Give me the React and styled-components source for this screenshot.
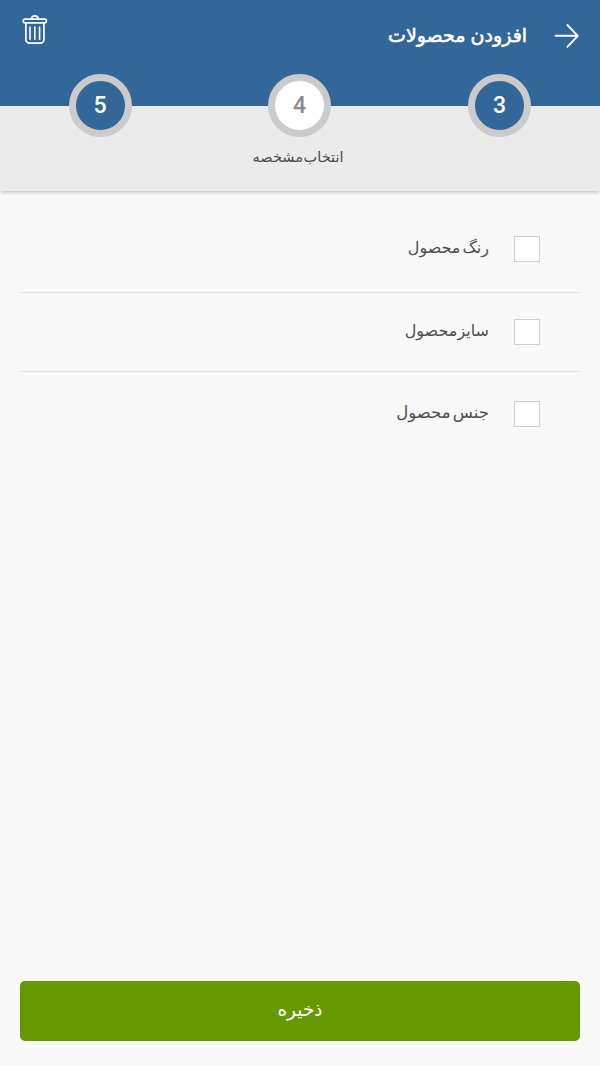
import React, { useState } from 'react';
import styled, { createGlobalStyle } from 'styled-components';


const GlobalStyle = createGlobalStyle`
    * {
        box-sizing: border-box;
    }
    body {
        margin: 0;
        background: #f9f9f9;
        font-family: "DejaVu Sans", "Noto Sans", sans-serif;
    }
`;

const Page = styled.div`
    display: flex;
    flex-direction: column;
    width: 600px;
    height: 1066px;
    background: #f9f9f9;
`;

const Header = styled.header`
    display: flex;
    height: 106px;
    padding: 13px 20px 0 21px;
    background: #336699;
    color: #fff;
`;

const IconButton = styled.button`
    display: flex;
    width: 28px;
    height: 34px;
    padding: 0;
    border: 0;
    background: none;
    color: inherit;
`;

const BackButton = styled(IconButton)`
    width: 26px;
    margin: 9px 0 0 0;
`;

const Title = styled.h1`
    margin: 6px 27px 0 0;
    font-size: 19px;
    font-weight: 400;
    line-height: 32px;
    word-spacing: -1px;
    white-space: nowrap;
    -webkit-text-stroke: 0.6px #fff;
    flex: 1;
`;

const Steps = styled.nav`
    display: grid;
    grid-template-columns: repeat(3, 200px);
    justify-items: center;
    height: 85px;
    background: #ebebeb;
    box-shadow: 0 3px 3px -1px rgba(0, 0, 0, 0.18);
`;

const Step = styled.div`
    display: flex;
    flex-direction: column;
    align-items: center;
    margin-top: -32.5px;
    margin-right: ${props => props.$shift || 0}px;
`;

const StepCircle = styled.div`
    display: flex;
    align-items: center;
    justify-content: center;
    width: 63px;
    height: 63px;
    border: 7px solid #cbcbcb;
    border-radius: 50%;
    background: ${props => props.$current ? '#fff' : '#336699'};
    color: ${props => props.$current ? '#8a8a8a' : '#fff'};
    font-family: Roboto, sans-serif;
    font-size: 23px;
    font-weight: 500;
`;

const StepLabel = styled.span`
    margin: 8px 3px 0 0;
    color: #4d4d4d;
    font-size: 14.5px;
    line-height: 24px;
    word-spacing: -4px;
    white-space: nowrap;
`;

const List = styled.ul`
    flex: 1;
    margin: 21px 20px 0;
    padding: 0;
    list-style: none;
`;

const Item = styled.li`
    height: ${props => props.$height}px;
    padding: ${props => props.$top}px 40px 0 0;
    border-bottom: ${props => props.$last ? '0' : '1px solid #e2e2e2'};
`;

const ItemLabel = styled.label`
    display: flex;
    align-items: center;
    gap: 25px;
    height: 26px;
    color: #4d4d4d;
    white-space: nowrap;
`;

const ItemText = styled.span`
    margin-top: -3px;
    font-size: ${props => props.$size}px;
    word-spacing: ${props => props.$spacing}px;
`;

const Checkbox = styled.input`
    appearance: none;
    width: 26px;
    height: 26px;
    margin: 0;
    border: 1px solid #cfcfcf;
    background: #fff;
    &:checked {
        background: #336699;
    }
`;

const SaveButton = styled.button`
    height: 60px;
    margin: 0 20px 25px;
    padding: 0 0 4px;
    border: 0;
    border-radius: 5px;
    background: #669900;
    color: #fff;
    font-family: inherit;
    font-size: 18.5px;
`;

const steps = [
    { number: 3, shift: 1 },
    { number: 4, label: 'انتخاب مشخصه', current: true, shift: 1 },
    { number: 5 },
];

const items = [
    { id: 'color', label: 'رنگ محصول', height: 81, top: 24, size: 16, spacing: -3 },
    { id: 'size', label: 'سایز محصول', height: 79, top: 26, size: 16, spacing: -5 },
    { id: 'material', label: 'جنس محصول', height: 80, top: 29, size: 16.5, spacing: -3 },
];

function TrashIcon() {
    return (
        <svg width="28" height="34" viewBox="0 0 28 34" fill="none" stroke="currentColor" strokeWidth="1.7" strokeLinecap="round" strokeLinejoin="round">
            <path d="M10.4 6C10.4 1.8 17.2 1.8 17.2 6" />
            <rect x="2.2" y="6.2" width="23.2" height="3.6" rx="1.6" />
            <path d="M4.9 10V26.5a3.6 3.6 0 0 0 3.6 3.6h10.8a3.6 3.6 0 0 0 3.6-3.6V10" />
            <path d="M9 14V26.3M13.8 14V26.3M18.6 14V26.3" strokeWidth="1.6" />
        </svg>
    );
}

function ArrowIcon() {
    return (
        <svg width="26" height="28" viewBox="0 0 26 28" fill="none" stroke="currentColor" strokeWidth="1.9" strokeLinecap="round" strokeLinejoin="round">
            <path d="M1.6 13.8H23.6M13.4 3L23.8 13.8L13.4 24.8" />
        </svg>
    );
}

export default function App() {
    const [ checked, setChecked ] = useState([]);

    const toggle = id => {
        setChecked(checked.includes(id) ? checked.filter(item => item !== id) : checked.concat(id));
    }

    return (
        <Page dir="rtl">
            <GlobalStyle />
            <Header>
                <BackButton><ArrowIcon /></BackButton>
                <Title>افزودن محصولات</Title>
                <IconButton><TrashIcon /></IconButton>
            </Header>
            <Steps>
                {steps.map(step => (
                    <Step key={step.number} $shift={step.shift}>
                        <StepCircle $current={step.current}>{step.number}</StepCircle>
                        {step.label && <StepLabel>{step.label}</StepLabel>}
                    </Step>
                ))}
            </Steps>
            <List>
                {items.map((item, index) => (
                    <Item key={item.id} $height={item.height} $top={item.top} $last={index === items.length - 1}>
                        <ItemLabel>
                            <Checkbox type="checkbox" checked={checked.includes(item.id)} onChange={() => toggle(item.id)} />
                            <ItemText $size={item.size} $spacing={item.spacing}>{item.label}</ItemText>
                        </ItemLabel>
                    </Item>
                ))}
            </List>
            <SaveButton>ذخیره</SaveButton>
        </Page>
    )
}
